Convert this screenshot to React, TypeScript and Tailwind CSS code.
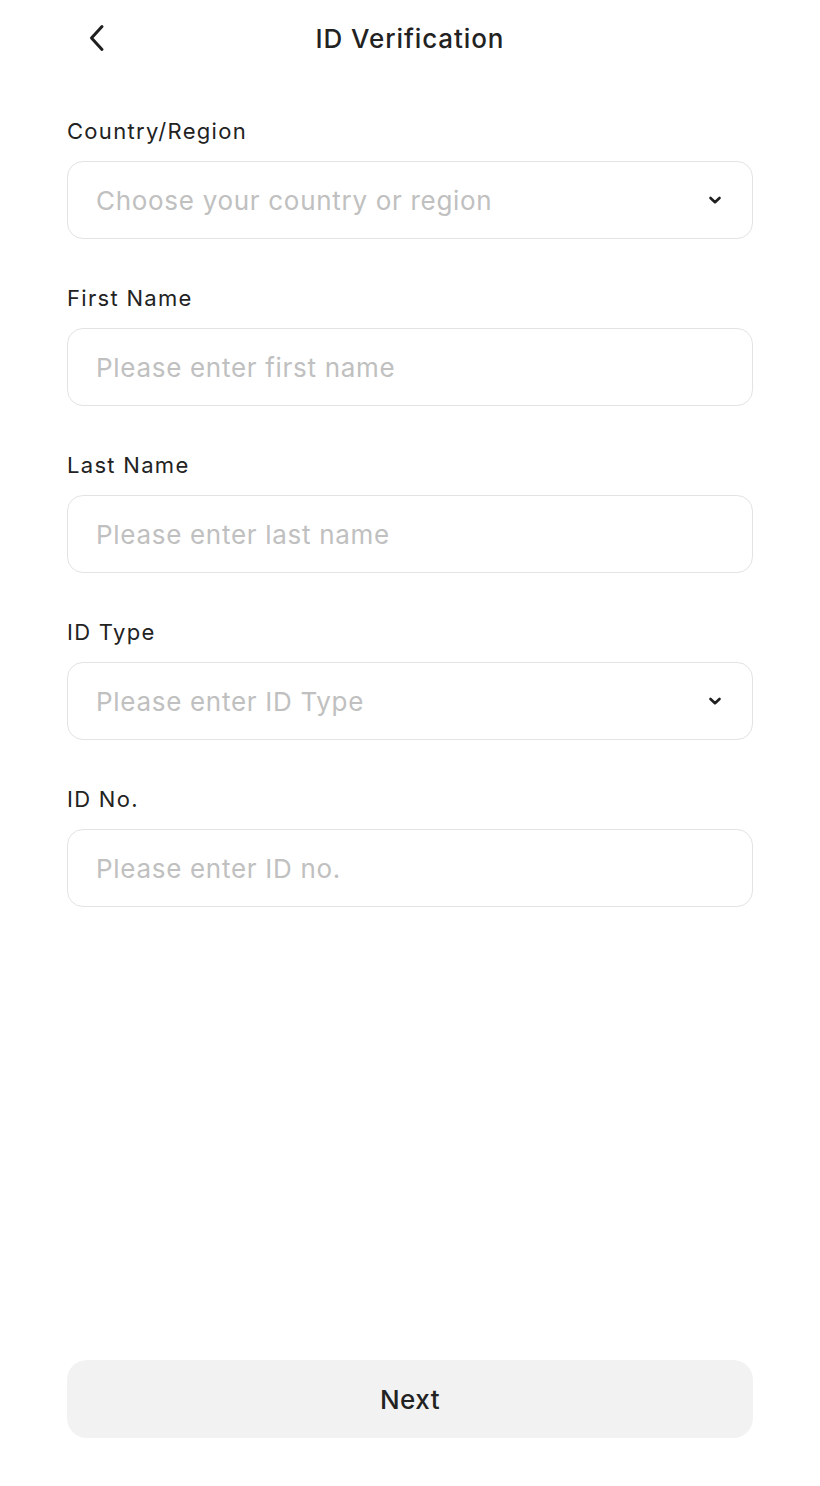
import React from "react";

function Chevron() {
  return (
    <svg width="14" height="10" viewBox="0 0 14 10" fill="none" className="shrink-0">
      <path d="M2.5 3 L7 7.2 L11.5 3" stroke="#1f1f1f" strokeWidth="2.6" strokeLinecap="round" strokeLinejoin="round" />
    </svg>
  );
}

function Field({ label, placeholder, select }: { label: string; placeholder: string; select?: boolean }) {
  return (
    <div className="flex flex-col">
      <div className="h-[30px] leading-[30px] text-[22px] text-[#222222] tracking-[1.3px]">{label}</div>
      <div className="mt-[15px] h-[78px] rounded-[16px] border border-[#e3e3e3] flex items-center pl-[28px] pr-[30px]">
        <span className="flex-1 text-[26px] text-[#c0c0c0] tracking-[0.7px]">{placeholder}</span>
        {select && <Chevron />}
      </div>
    </div>
  );
}

export default function App() {
  return (
    <div className="min-h-[1486px] w-full bg-white flex flex-col" style={{ fontFamily: "Inter, 'Noto Sans', sans-serif" }}>
      <div className="relative h-[76px] flex items-center justify-center">
        <button className="absolute left-[82px] top-[22px] w-[30px] h-[32px] flex items-center justify-center">
          <svg width="16" height="28" viewBox="0 0 16 28" fill="none">
            <path d="M13 2.5 L2.5 14 L13 25.5" stroke="#1f1f1f" strokeWidth="3" strokeLinecap="round" strokeLinejoin="round" />
          </svg>
        </button>
        <div className="text-[26px] font-medium text-[#222222] tracking-[0.9px]">ID Verification</div>
      </div>
      <div className="px-[67px] pt-[40px] flex flex-col gap-[44px]">
        <Field label="Country/Region" placeholder="Choose your country or region" select />
        <Field label="First Name" placeholder="Please enter first name" />
        <Field label="Last Name" placeholder="Please enter last name" />
        <Field label="ID Type" placeholder="Please enter ID Type" select />
        <Field label="ID No." placeholder="Please enter ID no." />
      </div>
      <div className="mt-auto px-[67px] pb-[48px]">
        <button className="w-full h-[78px] rounded-[20px] bg-[#f2f2f2] text-[26px] font-medium text-[#222222] tracking-[0.5px]">
          Next
        </button>
      </div>
    </div>
  );
}
